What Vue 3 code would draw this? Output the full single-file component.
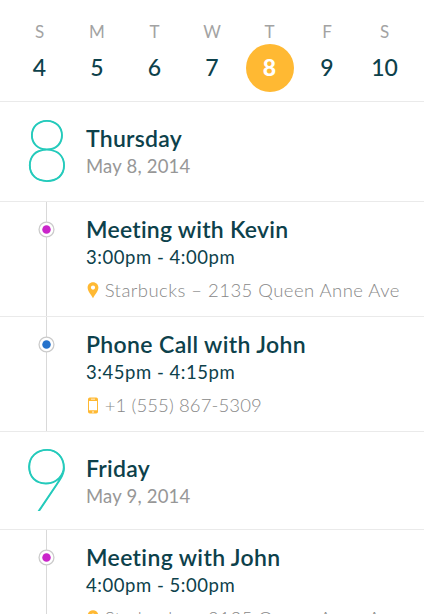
<script setup>
const week = [
  { letter: 'S', day: 4 },
  { letter: 'M', day: 5 },
  { letter: 'T', day: 6 },
  { letter: 'W', day: 7 },
  { letter: 'T', day: 8, active: true },
  { letter: 'F', day: 9 },
  { letter: 'S', day: 10 },
]

const days = [
  {
    number: 8,
    name: 'Thursday',
    date: 'May 8, 2014',
    key: 'thu',
    events: [
      { title: 'Meeting with Kevin', key: 'kevin', time: '3:00pm - 4:00pm', icon: 'pin', detail: 'Starbucks – 2135 Queen Anne Ave', tone: 'magenta' },
      { title: 'Phone Call with John', key: 'call', time: '3:45pm - 4:15pm', icon: 'phone', detail: '+1 (555) 867-5309', tone: 'blue' },
    ],
  },
  {
    number: 9,
    name: 'Friday',
    date: 'May 9, 2014',
    key: 'fri',
    events: [
      { title: 'Meeting with John', key: 'john', time: '4:00pm - 5:00pm', icon: 'pin', detail: 'Starbucks – 2135 Queen Anne Ave', tone: 'magenta' },
    ],
  },
]
</script>

<template>
  <main class="screen">
    <header class="week">
      <div v-for="(d, i) in week" :key="i" class="weekday" :class="{ active: d.active }">
        <span class="letter">{{ d.letter }}</span>
        <span class="num">{{ d.day }}</span>
      </div>
    </header>

    <template v-for="day in days" :key="day.key">
      <section class="day" :class="day.key">
        <div class="big">{{ day.number }}</div>
        <div class="info">
          <h2><span>{{ day.name }}</span></h2>
          <p><span>{{ day.date }}</span></p>
        </div>
      </section>

      <article v-for="e in day.events" :key="e.key" class="event" :class="e.key">
        <div class="rail">
          <svg class="marker" :class="e.tone" viewBox="0 0 16 16">
            <circle class="ring" cx="8" cy="8" r="7" />
            <circle class="dot" cx="8" cy="8" r="4" />
          </svg>
        </div>
        <div class="info">
          <h2><span>{{ e.title }}</span></h2>
          <p class="time"><span>{{ e.time }}</span></p>
          <p class="detail" :class="e.icon">
            <svg v-if="e.icon === 'pin'" class="icon" viewBox="0 0 12 17">
              <path fill-rule="evenodd" d="M6 .3C2.9.3.6 2.6.6 5.6c0 3.3 2.8 6.3 5.4 10.6 2.600-4.300 5.400-7.300 5.400-10.600C11.400 2.600 9.100.300 6 .300zM6 3.500a2.100 2.100 0 1 1 0 4.200 2.100 2.100 0 0 1 0-4.200z" />
            </svg>
            <svg v-else class="icon" viewBox="0 0 12 17">
              <path fill-rule="evenodd" d="M2.800.500h6.400a1.800 1.800 0 0 1 1.800 1.800v12.400a1.800 1.800 0 0 1-1.800 1.800H2.800A1.800 1.800 0 0 1 1 14.700V2.300A1.800 1.800 0 0 1 2.800.500zM2 4v9.300h8V4zM4 1.800v.800h4v-.800zM5.100 14.400v1h1.800v-1z" />
            </svg>
            <span>{{ e.detail }}</span>
          </p>
        </div>
      </article>
    </template>
  </main>
</template>

<style>
body {
  overflow: hidden;
}
</style>

<style scoped>
.screen {
  width: 424px;
  height: 614px;
  overflow: hidden;
  background: #fff;
  color: #0d414b;
  font-family: Lato, "Liberation Sans", sans-serif;
}

h2,
p {
  margin: 0;
  white-space: nowrap;
}

.week {
  display: grid;
  grid-template-columns: repeat(7, 57.5px);
  justify-content: center;
  height: 101px;
  box-sizing: border-box;
}

.weekday {
  display: flex;
  flex-direction: column;
  align-items: center;
  padding-top: 20px;
}

.letter {
  height: 24px;
  line-height: 24px;
  font-size: 17px;
  font-weight: 400;
  color: #a3a3a3;
}

.num {
  width: 48px;
  height: 48px;
  border-radius: 50%;
  line-height: 47px;
  text-align: center;
  font-size: 23px;
  font-weight: 500;
}

.active .num {
  background: #ffb933;
  color: #fff;
  font-weight: 900;
}

.day,
.event {
  display: flex;
  box-sizing: border-box;
  border-top: 1px solid #eaeaea;
}

.day {
  height: 100px;
}

.day.fri {
  height: 98px;
}

.event {
  height: 115px;
}

.big {
  flex: 0 0 86px;
  margin-left: 4px;
  margin-right: -4px;
  text-align: center;
  font-size: 86px;
  line-height: 92px;
  font-weight: 100;
  color: #24cabb;
  -webkit-text-stroke: 1px #24cabb;
}

.thu .big {
  transform: scaleX(0.93);
}

.fri .big {
  line-height: 90px;
}

h2 {
  height: 28px;
  line-height: 28px;
  font-size: 23px;
  font-weight: 600;
  letter-spacing: 0.24px;
}

.call h2,
.john h2 {
  letter-spacing: 0.36px;
}

p {
  height: 28px;
  line-height: 28px;
  font-size: 18.5px;
  letter-spacing: 0.54px;
}

.day .info {
  padding-top: 22px;
}

.day p {
  color: #979797;
  letter-spacing: 0.2px;
}

.event .info {
  padding-top: 13px;
}

.rail {
  flex: 0 0 86px;
  padding: 19px 0 0 38px;
  box-sizing: border-box;
  background: linear-gradient(#d9d9d9, #d9d9d9) 46px 0 / 1px 100% no-repeat;
}

.marker {
  display: block;
  width: 17px;
  height: 17px;
}

.ring {
  fill: #fff;
  stroke: #cbcbcb;
  stroke-width: 1.2;
}

.magenta .dot {
  fill: #ca25ca;
}

.blue .dot {
  fill: #2672cb;
}

.detail {
  display: flex;
  align-items: center;
  margin-top: 5px;
  color: #888;
  font-weight: 300;
  letter-spacing: 0.46px;
}

.detail.phone {
  letter-spacing: 0.12px;
}

.icon {
  width: 12px;
  height: 17px;
  margin-right: 6px;
  margin-left: 0.7px;
  fill: #ffb933;
}
</style>
